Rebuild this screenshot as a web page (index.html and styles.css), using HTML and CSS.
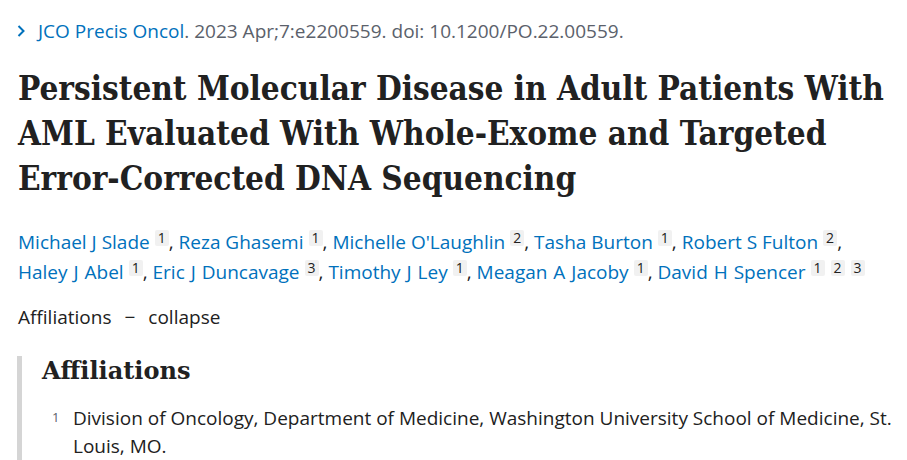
FILE: index.html
```html
<!DOCTYPE html>
<html lang="en">
<head>
<meta charset="utf-8">
<title>Persistent Molecular Disease in Adult Patients With AML</title>
<link rel="stylesheet" href="styles.css">
</head>
<body>
<main class="article">
  <div class="citation">
    <svg class="chev" width="9" height="12" viewBox="0 0 9 12"><path d="M1.5 1 L6.5 6 L1.5 11" fill="none" stroke="#0071bc" stroke-width="2"/></svg>
    <a class="journal" href="#">JCO Precis Oncol</a><span class="meta">. 2023 Apr;7:e2200559. doi: 10.1200/PO.22.00559.</span>
  </div>
  <h1 class="title">Persistent Molecular Disease in Adult Patients With AML Evaluated With Whole-Exome and Targeted Error-Corrected DNA Sequencing</h1>
  <div class="authors">
    <span class="author"><a href="#">Michael J Slade</a><sup class="ref">1</sup></span>, <span class="author"><a href="#">Reza Ghasemi</a><sup class="ref">1</sup></span>, <span class="author"><a href="#">Michelle O'Laughlin</a><sup class="ref">2</sup></span>, <span class="author"><a href="#">Tasha Burton</a><sup class="ref">1</sup></span>, <span class="author"><a href="#">Robert S Fulton</a><sup class="ref">2</sup></span>,<br>
    <span class="author"><a href="#">Haley J Abel</a><sup class="ref">1</sup></span>, <span class="author"><a href="#">Eric J Duncavage</a><sup class="ref">3</sup></span>, <span class="author"><a href="#">Timothy J Ley</a><sup class="ref">1</sup></span>, <span class="author"><a href="#">Meagan A Jacoby</a><sup class="ref">1</sup></span>, <span class="author"><a href="#">David H Spencer</a><sup class="ref">1</sup><sup class="ref">2</sup><sup class="ref">3</sup></span>
  </div>
  <div class="toggle"><span>Affiliations</span><span class="dash">&minus;</span><span>collapse</span></div>
  <section class="affiliations">
    <h2 class="aff-title">Affiliations</h2>
    <ul class="aff-list">
      <li class="aff-item"><sup class="num">1</sup><span>Division of Oncology, Department of Medicine, Washington University School of Medicine, St. Louis, MO.</span></li>
    </ul>
  </section>
</main>
</body>
</html>
```
FILE: styles.css
```css
html, body { margin: 0; padding: 0; background: #fff; }
body { font-family: "Open Sans", "Noto Sans", sans-serif; color: #212121; }
a { color: #0071bc; text-decoration: none; }
.article { padding: 18px 8px 0 18px; }
.citation { display: flex; align-items: center; font-size: 19px; line-height: 26px; }
.chev { margin-left: -1px; margin-right: 12px; flex: none; }
.meta { color: #5b616b; }
.title { font-family: "DejaVu Serif Condensed", "DejaVu Serif", serif; font-weight: bold; font-size: 33px; line-height: 45px; margin: 22px 0 0 0; color: #212121; letter-spacing: 0; }
.authors { font-size: 19px; line-height: 30px; margin-top: 26px; color: #212121; }
.author:nth-child(n+6) { word-spacing: 1px; }
.ref { display: inline-block; background: #f1f1f1; color: #212121; font-size: 14px; line-height: 16px; padding: 0 3px; border-radius: 2px; vertical-align: 6px; margin-left: 5px; word-spacing: 0; }
.ref + .ref { margin-left: 6px; }
.toggle { display: flex; gap: 13px; font-size: 19px; line-height: 28px; margin-top: 16px; }
.affiliations { margin: 25px 0 0 -1px; border-left: 5px solid #d5d5d5; padding-left: 20px; }
.aff-title { font-family: "DejaVu Serif", serif; font-weight: bold; font-size: 24px; line-height: 30px; margin: 0; }
.aff-list { list-style: none; margin: 18px 0 0 0; padding: 0; }
.aff-item { display: flex; font-size: 19px; line-height: 28px; }
.num { font-size: 13px; color: #5b616b; width: 21px; flex: none; padding-left: 10px; vertical-align: top; line-height: 26px; }
```
